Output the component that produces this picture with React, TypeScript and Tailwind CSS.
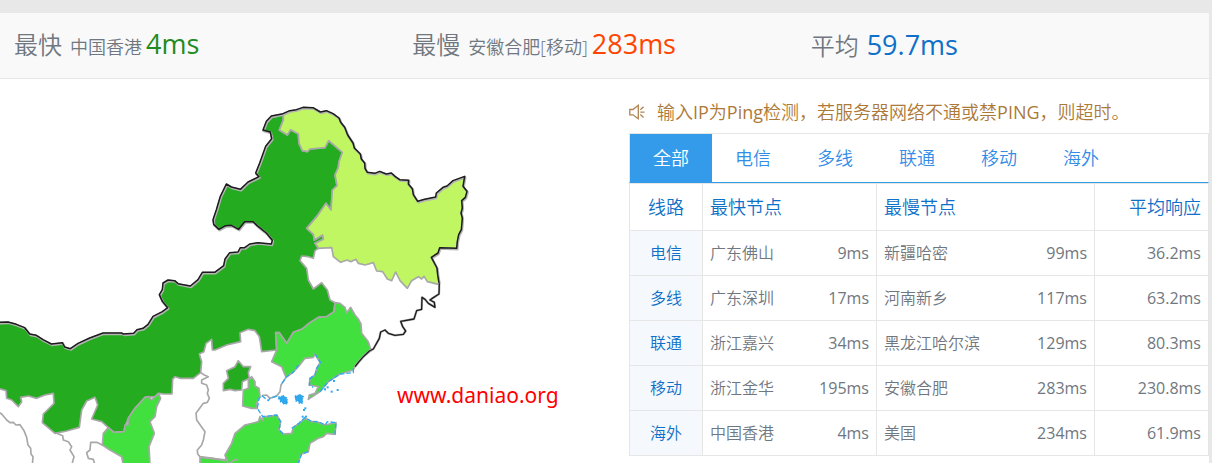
import { useState } from "react";

const summary = [
  { label: "最快", place: "中国香港", value: "4ms", tone: "text-[#228b22]" },
  { label: "最慢", place: "安徽合肥[移动]", value: "283ms", tone: "text-[#ff4500]" },
  { label: "平均", place: "", value: "59.7ms", tone: "text-[#0e70c8]" },
];

const tabs = ["全部", "电信", "多线", "联通", "移动", "海外"];

const rows = [
  { line: "电信", fast: "广东佛山", fastMs: "9ms", slow: "新疆哈密", slowMs: "99ms", avg: "36.2ms" },
  { line: "多线", fast: "广东深圳", fastMs: "17ms", slow: "河南新乡", slowMs: "117ms", avg: "63.2ms" },
  { line: "联通", fast: "浙江嘉兴", fastMs: "34ms", slow: "黑龙江哈尔滨", slowMs: "129ms", avg: "80.3ms" },
  { line: "移动", fast: "浙江金华", fastMs: "195ms", slow: "安徽合肥", slowMs: "283ms", avg: "230.8ms" },
  { line: "海外", fast: "中国香港", fastMs: "4ms", slow: "美国", slowMs: "234ms", avg: "61.9ms" },
];

const northBorder =
  "M-6 968L25 967L50 974L75 984L90 1003L110 1007L130 1020L155 1033L188 1029L195 1042L212 1047L235 1031L270 1015L310 1000L365 1000L372 1003L402 1001L412 990L430 986L445 974L460 950L488 936L504 924L488 905L479 885L488 870L490 850L505 841L525 843L535 852L572 859L595 840L608 818L645 818L672 798L676 778L690 759L715 757L722 744L735 744L750 733L775 729L815 733L818 722L800 700L775 680L760 666L735 666L717 689L695 677L678 678L658 689L642 674L640 660L650 630L662 590L680 553L695 562L722 569L745 547L778 531L768 520L780 490L798 440L816 417L812 397L790 391L800 365L815 349L850 342";

const eastBorder =
  "M850 342L870 333L890 330L910 323L940 324L962 337L980 333L1000 342L1018 355L1023 368L1035 383L1044 406L1060 430L1064 445L1082 463L1085 478L1095 490L1096 506L1103 518L1125 521L1140 515L1160 523L1175 520L1186 530L1200 540L1227 542L1226 553L1238 567L1241 585L1254 605L1275 599L1308 592L1310 580L1330 563L1342 559L1360 543L1395 530L1390 560L1402 575L1397 593L1386 603L1388 625L1384 640L1388 655L1385 690L1377 705L1373 725L1371 746L1320 744L1315 760L1295 773L1304 790L1312 805L1314 825L1318 850";

const jilinBorder =
  "M1318 850L1317 882L1300 893L1290 900L1303 907L1305 922L1285 910L1275 898L1266 892L1265 928L1250 932L1242 957L1202 964L1208 980L1217 993L1210 1003L1185 1006L1165 1000L1155 990L1142 996L1138 1015L1120 1047L1108 1053L1090 1070L1077 1085L1065 1100";

const innerMongolia =
  northBorder +
  "L850 360L838 390L862 405L872 389L895 402L897 430L907 452L922 455L930 447L975 443L986 422L1027 457L1017 485L1015 502L1005 525L1011 557L997 570L993 630L978 610L950 650L920 685L940 703L943 720L968 705L970 718L945 730L955 745L945 752L940 775L925 770L905 768L900 782L920 805L925 840L940 867L965 848L982 870L990 900L1005 908L1002 935L980 950L955 952L930 968L905 988L880 997L860 1030L838 998L827 998L830 1050L785 1055L778 1010L765 992L745 988L720 998L722 1025L700 1030L680 1035L645 1050L637 1050L635 1018L618 1030L612 1055L598 1062L605 1085L602 1118L580 1135L540 1135L525 1130L518 1138L516 1182L490 1182L478 1180L465 1190L435 1192L405 1225L385 1255L375 1280L372 1295L342 1297L325 1283L305 1265L275 1257L293 1215L285 1192L260 1203L245 1230L238 1282L200 1293L165 1300L127 1268L130 1242L162 1210L160 1180L135 1185L110 1195L85 1188L62 1192L65 1205L55 1220L35 1200L20 1195L18 1172L-6 1165Z";

const heilongjiang =
  eastBorder +
  "L1315 853L1282 845L1272 829L1265 837L1255 830L1235 842L1222 865L1200 842L1187 816L1175 842L1162 837L1148 815L1130 813L1120 788L1095 795L1075 790L1068 778L1052 785L1042 780L1022 787L1000 770L995 743L955 745L945 730L970 718L968 705L943 720L940 703L920 685L950 650L978 610L993 630L997 570L1011 557L1005 525L1015 502L1017 485L1027 457L986 422L975 443L930 447L922 455L907 452L897 430L895 402L872 389L862 405L838 390L850 360Z";

const liaoning =
  "M1005 908L1020 910L1035 922L1040 938L1052 922L1065 945L1075 957L1083 972L1085 1000L1105 1025L1112 1048L1120 1047L1090 1070L1065 1100L1060 1110L1020 1122L985 1145L960 1175L925 1198L928 1185L945 1180L955 1160L928 1155L930 1135L945 1125L950 1105L960 1088L945 1062L940 1072L915 1075L895 1100L880 1116L858 1132L845 1100L815 1085L830 1050L827 998L838 998L860 1030L880 997L905 988L930 968L955 952L980 950L1002 935Z";

const shaanxi =
  "M342 1297L325 1283L310 1300L307 1335L330 1350L365 1370L370 1396L450 1396L447 1340L463 1300L450 1265L465 1250L470 1220L482 1195L475 1180L465 1190L455 1200L445 1190L435 1192L428 1200L405 1225L385 1255L384 1275L375 1275L372 1295Z";

const beijing =
  "M715 1082L730 1100L752 1100L745 1118L748 1135L727 1145L725 1170L705 1172L690 1168L670 1172L670 1150L685 1135L680 1112L705 1100Z";

const tianjin =
  "M755 1130L765 1145L765 1158L777 1165L780 1190L770 1210L772 1225L755 1225L728 1218L730 1170L745 1165L745 1140Z";

const shandong =
  "M780 1250L788 1262L790 1250L805 1250L830 1245L842 1265L837 1290L850 1302L875 1300L880 1282L897 1270L915 1255L935 1265L950 1265L975 1275L1008 1268L1005 1303L980 1300L970 1310L955 1315L930 1330L925 1355L905 1362L900 1370L895 1396L685 1396L675 1365L695 1330L705 1300L735 1275L775 1265Z";

const innerLines = [
  "M-6 1235L5 1242L20 1260L30 1268L40 1267L48 1275L60 1274L72 1292L80 1312L84 1335L92 1345L93 1362L99 1370L97 1396",
  "M170 1300L188 1307L190 1320L205 1325L215 1340L210 1350L222 1370L215 1396",
  "M307 1335L290 1327L272 1327L270 1350L260 1358L265 1375L280 1378L285 1396",
  "M602 1118L613 1125L625 1130L605 1140L605 1150L620 1155L625 1170L622 1180L628 1195L622 1207L610 1210L588 1240L590 1260L615 1295L610 1320L605 1335L592 1350L593 1362L600 1370L640 1375L675 1382L680 1370",
  "M690 1389L705 1378L715 1380",
];

const blueCoast = [
  "M1060 1105L1060 1118L1020 1122L985 1145L960 1175",
  "M945 1062L962 1088L950 1105L945 1125L930 1135L928 1155L940 1162",
  "M895 1095L880 1116L858 1132L843 1155",
  "M830 1188L810 1195L805 1202L785 1187L777 1195L772 1225L788 1250L830 1245L842 1265L837 1290L850 1302",
  "M875 1285L897 1270L915 1252L935 1265L955 1265L975 1275L982 1265L1008 1268L1005 1303",
  "M925 1355L905 1362L895 1389",
];

const islets = [
  [983, 1162], [975, 1168], [995, 1175], [1013, 1170], [1002, 1143], [916, 1225], [912, 1230], [908, 1250], [918, 1250],
];

const shoals = [
  "M835 1190H844V1187H853V1191H860V1198H862V1212H848V1206H840V1198H835Z",
  "M885 1187H894V1184H903V1187H910V1192H908V1210H896V1204H887V1197H885Z",
];

function ChinaMap() {
  return (
    <svg viewBox="0 237 1440 1152" className="block w-[480px] max-w-full" role="img" aria-label="Ping">
      <g stroke="#a8a8a8" strokeWidth="5" strokeLinejoin="round">
        <path d={innerMongolia} fill="#25ab1f" />
        <path d={heilongjiang} fill="#bff662" />
        <path d={liaoning} fill="#42e03f" />
        <path d={shaanxi} fill="#42e03f" />
        <path d={beijing} fill="#25ab1f" />
        <path d={tianjin} fill="#42e03f" />
        <path d={shandong} fill="#42e03f" />
        <path d="M600 1372L640 1376L682 1380L684 1396L600 1396Z" fill="#42e03f" />
        <path d="M858 1132L843 1155L840 1175L830 1188L810 1195L800 1185L785 1187" fill="none" />
        {innerLines.map((d) => (
          <path key={d} d={d} fill="none" />
        ))}
      </g>
      <g fill="none" stroke="#2fa8ee" strokeWidth="4" strokeDasharray="14 6">
        {blueCoast.map((d) => (
          <path key={d} d={d} />
        ))}
      </g>
      <g fill="#2fa8ee">
        {islets.map(([x, y]) => (
          <rect key={`${x}-${y}`} x={x - 3} y={y - 3} width="6" height="6" />
        ))}
        {shoals.map((d) => (
          <path key={d} d={d} stroke="#2fa8ee" strokeWidth="3" strokeDasharray="4 4" />
        ))}
      </g>
      <g fill="none" strokeLinejoin="round">
        <path d={northBorder + eastBorder.replace("M", "L")} stroke="#b4b4b4" strokeWidth="7" transform="translate(1 2)" />
        <path d={jilinBorder} stroke="#b4b4b4" strokeWidth="7" />
        <g stroke="#1c1c1c" strokeWidth="4.5">
          <path d={northBorder + eastBorder.replace("M", "L")} transform="translate(-1 -1)" />
          <path d={jilinBorder} strokeWidth="4" />
        </g>
      </g>
    </svg>
  );
}

function SpeakerIcon() {
  return (
    <svg viewBox="0 0 16 16" className="size-4 shrink-0" fill="none" stroke="#b08350" strokeWidth="1.3" aria-hidden="true">
      <path d="M.8 5.5H4L9.3 1.3V14.7L4 10.8H.8Z" />
      <path d="M11.3 8.2H15.5M11.3 5.8L14.6 2.8M11.3 10.6L14.6 13.5" />
    </svg>
  );
}

export default function App() {
  const [active, setActive] = useState("全部");
  const cell = "border border-[#e6e6e6] px-[7px] py-0 font-[350]";
  return (
    <div className="overflow-hidden border-t-[13px] border-r-[3px] border-[#e8e8e8] bg-white font-['Open_Sans','Noto_Sans_CJK_SC',sans-serif] font-normal text-[#6f7780]">
      <header className="grid h-[66px] grid-cols-3 items-center border-b border-[#e8e8e8] bg-[#f9f9f9] pl-[14px]">
        {summary.map((s) => (
          <p key={s.label} className="flex items-baseline whitespace-nowrap font-[350] leading-[40px]">
            <span className="mr-2 text-[24px]">{s.label}</span>
            {s.place && <span className="mr-1 text-[18px]">{s.place}</span>}
            <span className={`text-[27px] font-normal ${s.tone}`}>{s.value}</span>
          </p>
        ))}
      </header>

      <main className="flex items-start">
        <section className="relative min-w-0 flex-1">
          <ChinaMap />
          <span className="absolute top-[300px] left-[397px] font-['Noto_Sans',sans-serif] text-[21px] leading-[32px] text-[#ff0000]">
            www.daniao.org
          </span>
        </section>

        <section className="w-[580px] shrink-0 pt-4">
          <div className="mb-1 flex h-[34px] items-center gap-3 whitespace-nowrap text-[18px] text-[#ac7a38]">
            <SpeakerIcon />
            <p className="font-[350]">
              输入<span className="font-normal">IP</span>为<span className="font-normal">Ping</span>
              检测，若服务器网络不通或禁<span className="font-normal">PING</span>，则超时。
            </p>
          </div>
          <nav className="flex h-[50px] border border-b-[#349bea] border-[#e6e6e6]">
            {tabs.map((t) => (
              <button
                key={t}
                type="button"
                onClick={() => setActive(t)}
                className={`px-[23px] text-[18px] font-[350] ${active === t ? "bg-[#349bea] text-white" : "text-[#338de6]"}`}
              >
                {t}
              </button>
            ))}
          </nav>
          <table className="w-full table-fixed border-collapse text-[16px] leading-6">
            <colgroup>
              <col className="w-[73px]" />
              <col className="w-[174px]" />
              <col className="w-[218px]" />
              <col />
            </colgroup>
            <thead className="text-[18px] text-[#0e70c8]">
              <tr className="h-[47px]">
                <th className={`${cell} text-center`}>线路</th>
                <th className={`${cell} text-left`}>最快节点</th>
                <th className={`${cell} text-left`}>最慢节点</th>
                <th className={`${cell} text-right`}>平均响应</th>
              </tr>
            </thead>
            <tbody>
              {rows.map((r) => (
                <tr key={r.line} className="h-[45px]">
                  <th className={`${cell} bg-[#f5f9fd] text-center text-[#0e70c8]`}>{r.line}</th>
                  <td className={cell}>
                    <div className="flex justify-between">
                      <span>{r.fast}</span>
                      <span className="font-normal">{r.fastMs}</span>
                    </div>
                  </td>
                  <td className={cell}>
                    <div className="flex justify-between">
                      <span>{r.slow}</span>
                      <span className="font-normal">{r.slowMs}</span>
                    </div>
                  </td>
                  <td className={`${cell} text-right`}>
                    <span className="font-normal">{r.avg}</span>
                  </td>
                </tr>
              ))}
            </tbody>
          </table>
        </section>
      </main>
    </div>
  );
}
